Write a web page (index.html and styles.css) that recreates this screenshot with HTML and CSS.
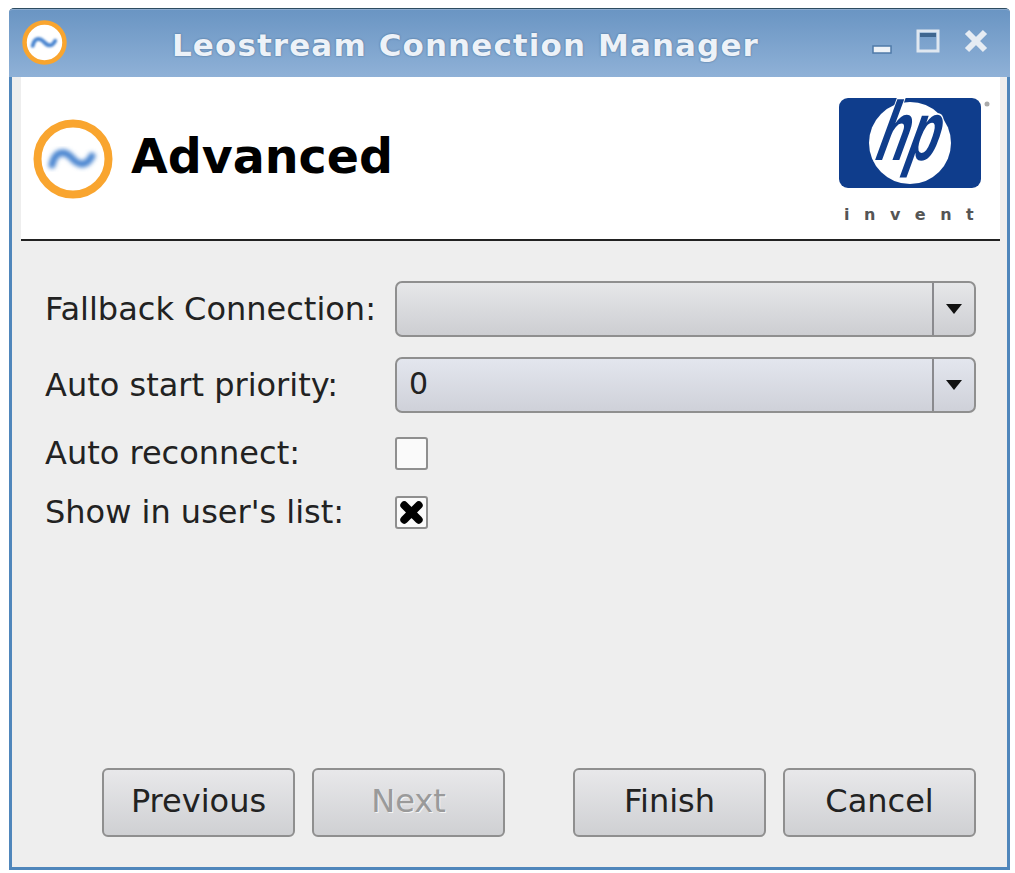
FILE: index.html
```html
<!DOCTYPE html>
<html lang="en">
<head>
    <meta charset="UTF-8">
    <title>Leostream Connection Manager</title>
    <link rel="stylesheet" href="styles.css">
</head>
<body>
    <svg class="defs" width="0" height="0">
        <defs>
            <filter id="soft" x="-20%" y="-50%" width="140%" height="200%"><feGaussianBlur stdDeviation="2"></feGaussianBlur></filter>
            <symbol id="leo" viewBox="0 0 80 80">
                <circle cx="40" cy="40" r="35.5" fill="#fff" stroke="#f9a52f" stroke-width="8"></circle>
                <path d="M19 46 C22 32 31 31 38 38 C44 45 52 50 59 37" fill="none" stroke="#4c86d0" stroke-width="7" stroke-linecap="round" filter="url(#soft)"></path>
            </symbol>
        </defs>
    </svg>

    <div class="window">
        <div class="titlebar">
            <svg class="title-icon"><use href="#leo"></use></svg>
            <div class="title">Leostream Connection Manager</div>
            <div class="controls">
                <svg class="ctl ctl-min" viewBox="0 0 20 10"><rect x="1" y="1" width="18" height="7" fill="#eef2f7" stroke="#4f7aa8" stroke-width="1.5"></rect></svg>
                <svg class="ctl ctl-max" viewBox="0 0 24 24"><rect x="2" y="2" width="20" height="20" fill="none" stroke="#dfe7f0" stroke-width="3"></rect><rect x="4" y="4" width="16" height="4" fill="#3f668f"></rect></svg>
                <svg class="ctl ctl-close" viewBox="0 0 24 24"><path d="M3 3 L21 21 M21 3 L3 21" stroke="#e6ecf3" stroke-width="6"></path></svg>
            </div>
        </div>

        <div class="client">
            <div class="banner">
                <svg class="banner-icon"><use href="#leo"></use></svg>
                <h1>Advanced</h1>
                <div class="logo">
                    <svg class="hp" viewBox="0 0 154 92">
                        <rect x="0" y="0" width="142" height="90" rx="9" fill="#0f3d8c"></rect>
                        <circle cx="71" cy="45" r="41" fill="#fff"></circle>
                        <text class="hp-text" transform="translate(66 62) skewX(-14) scale(0.6 1)" text-anchor="middle">hp</text>
                        <circle cx="148" cy="6" r="2.5" fill="#aaa"></circle>
                    </svg>
                    <div class="invent">invent</div>
                </div>
            </div>

            <div class="form">
                <div class="row">
                    <label class="field-label">Fallback Connection:</label>
                    <div class="combo">
                        <span class="combo-value"></span>
                        <span class="combo-arrow"></span>
                    </div>
                </div>
                <div class="row">
                    <label class="field-label">Auto start priority:</label>
                    <div class="combo combo-active">
                        <span class="combo-value">0</span>
                        <span class="combo-arrow"></span>
                    </div>
                </div>
                <div class="row row-check">
                    <label class="field-label">Auto reconnect:</label>
                    <div class="check"></div>
                </div>
                <div class="row row-check">
                    <label class="field-label">Show in user's list:</label>
                    <div class="check">
                        <svg viewBox="0 0 24 24"><path d="M6 6 L18 18 M18 6 L6 18" stroke="#000" stroke-width="6.5" stroke-linecap="round"></path></svg>
                    </div>
                </div>
            </div>

            <div class="buttons">
                <button type="button">Previous</button>
                <button type="button" disabled>Next</button>
                <button type="button" class="btn-finish">Finish</button>
                <button type="button">Cancel</button>
            </div>
        </div>
    </div>
</body>
</html>
```

FILE: styles.css
```css
html, body {
    margin: 0;
    height: 100%;
    background: #fff;
}

body {
    font-family: "DejaVu Sans", sans-serif;
    padding: 8px 5px 3px 9px;
    box-sizing: border-box;
}

.defs {
    display: block;
    height: 0;
}

.window {
    width: 1001px;
    height: 862px;
    display: flex;
    flex-direction: column;
    box-sizing: border-box;
    border-radius: 5px 5px 0 0;
    background: #4f86bb;
    padding: 0 3px 3px;
    border-top: 1px solid #2e4c60;
}

.titlebar {
    height: 68px;
    margin: 0 -3px;
    padding: 0 22px 0 13px;
    display: flex;
    align-items: center;
    border-top: 1px solid #8dacd0;
    background: linear-gradient(#6a95c3, #8fb1d7);
    box-sizing: border-box;
    border-radius: 4px 4px 0 0;
}

.title-icon {
    width: 45px;
    height: 45px;
    margin-top: -2px;
}

.title {
    flex: 1;
    margin: 3px 0 0 105px;
    font-size: 31px;
    font-weight: bold;
    letter-spacing: 1.1px;
    color: #edf2f8;
    text-shadow: 0 0 2px #3d6288;
    white-space: nowrap;
}

.controls {
    display: flex;
    align-items: flex-end;
    gap: 24px;
    margin-top: -6px;
}

.ctl {
    display: block;
}

.ctl-min {
    width: 20px;
    height: 10px;
    margin-bottom: -2px;
}

.ctl-max, .ctl-close {
    width: 24px;
    height: 24px;
}

.client {
    flex: 1;
    display: flex;
    flex-direction: column;
    background: #eee;
    padding: 0 7px 30px 9px;
}

.banner {
    height: 164px;
    display: flex;
    align-items: center;
    background: #fff;
    border-bottom: 2px solid #222;
    box-sizing: border-box;
    padding-left: 12px;
}

.banner-icon {
    width: 80px;
    height: 80px;
    margin-top: 2px;
}

.banner h1 {
    flex: 1;
    margin: -4px 0 0 18px;
    font-size: 47.5px;
    font-weight: bold;
    color: #000;
}

.logo {
    width: 161px;
    align-self: flex-start;
    padding-top: 21px;
}

.hp {
    display: block;
    width: 154px;
    height: 92px;
    overflow: visible;
}

.hp-text {
    font-family: "Liberation Sans", sans-serif;
    font-size: 84px;
    font-weight: bold;
    font-style: italic;
    fill: #0f3d8c;
    stroke: #fff;
    stroke-width: 3px;
    paint-order: stroke;
}

.invent {
    margin-top: 16px;
    font-size: 16px;
    font-weight: bold;
    letter-spacing: 14.5px;
    color: #555;
    padding-left: 5px;
    white-space: nowrap;
    line-height: 18px;
}

.form {
    padding-top: 40px;
}

.row {
    display: flex;
    align-items: center;
}

.row + .row {
    margin-top: 20px;
}

.row + .row-check {
    margin-top: 24px;
}

.row-check + .row-check {
    margin-top: 26px;
}

.field-label {
    width: 350px;
    padding-left: 24px;
    font-size: 32px;
    line-height: 33px;
    color: #222;
    white-space: nowrap;
}

.combo {
    width: 581px;
    height: 56px;
    display: flex;
    box-sizing: border-box;
    border: 2px solid #8f8f8f;
    border-radius: 7px;
    background: linear-gradient(#e6e7e9, #cdced2);
}

.combo-active {
    background: linear-gradient(#e3e6ee, #cfd1d9);
}

.combo-value {
    flex: 1;
    padding-left: 12px;
    font-size: 30px;
    line-height: 50px;
    color: #222;
}

.combo-arrow {
    width: 40px;
    border-left: 2px solid #8a8a8e;
    display: flex;
    align-items: center;
    justify-content: center;
}

.combo-arrow::after {
    content: "";
    border-top: 10px solid #111;
    border-left: 8px solid transparent;
    border-right: 8px solid transparent;
}

.check {
    width: 33px;
    height: 33px;
    box-sizing: border-box;
    border: 2px solid #8f8f8f;
    border-radius: 3px;
    background: #fafafa;
}

.check svg {
    display: block;
    width: 100%;
    height: 100%;
}

.buttons {
    margin-top: auto;
    display: flex;
    gap: 17px;
    padding-left: 81px;
}

.buttons button {
    width: 193px;
    height: 69px;
    font-family: inherit;
    font-size: 32px;
    color: #222;
    border: 2px solid #8f8f8f;
    border-radius: 6px;
    background: linear-gradient(#e8e8ea, #cfd0d3);
    padding: 0 0 4px;
}

.buttons button:disabled {
    color: #9a9a9a;
    text-shadow: 1px 1px 0 #f5f5f5;
}

.buttons .btn-finish {
    margin-left: 51px;
}
```
